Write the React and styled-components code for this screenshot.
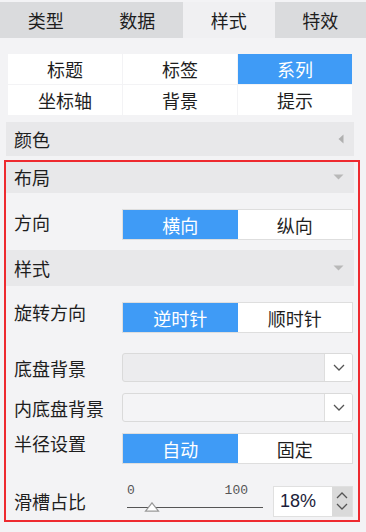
import React from "react";
import styled, { createGlobalStyle } from "styled-components";

const Global = createGlobalStyle`
  html, body { margin: 0; padding: 0; background: #f3f3f5; }
  body { font-family: "Noto Sans CJK SC", "Noto Sans", sans-serif; color: #222; }
  * { box-sizing: border-box; }
`;

const Page = styled.div`
  position: relative;
  width: 366px;
  height: 532px;
  overflow: hidden;
  background: #f3f3f5;
  padding-top: 2px;
`;

const TabBar = styled.div`
  display: grid;
  grid-template-columns: repeat(4, 1fr);
  height: 36px;
  background: #dadbdd;
`;

const Tab = styled.div`
  display: flex;
  align-items: center;
  justify-content: center;
  font-size: 18px;
  color: #1e1e1e;
  background: ${(p) => (p.$active ? "#f0f0f2" : "#dadbdd")};
`;

const SubTabs = styled.div`
  display: grid;
  grid-template-columns: repeat(3, 1fr);
  grid-auto-rows: 30px;
  gap: 1px;
  margin: 16px 14px 0 8px;
`;

const SubTab = styled.div`
  display: flex;
  align-items: center;
  justify-content: center;
  font-size: 18px;
  color: ${(p) => (p.$active ? "#fff" : "#1e1e1e")};
  background: ${(p) => (p.$active ? "#3f9bf6" : "#ffffff")};
`;

const Panel = styled.div`
  display: flex;
  flex-direction: column;
  margin: 7px 12px 0 6px;
`;

const SectionHeader = styled.div`
  display: flex;
  align-items: center;
  justify-content: space-between;
  height: ${(p) => p.$h || 34}px;
  margin-top: ${(p) => p.$top || 0}px;
  padding: 0 10px 0 8px;
  background: #e8e8ea;
  font-size: 18px;
  color: #1e1e1e;
`;

const Row = styled.div`
  display: flex;
  align-items: ${(p) => (p.$alignTop ? "flex-start" : "center")};
  margin-top: ${(p) => p.$top || 0}px;
  padding-right: 1px;
`;

const Label = styled.div`
  width: 116px;
  flex: none;
  padding-left: 8px;
  padding-top: ${(p) => p.$pt || 0}px;
  font-size: 18px;
  line-height: ${(p) => (p.$alignTop ? "20px" : "normal")};
  color: #1e1e1e;
`;

const Segmented = styled.div`
  flex: 1;
  display: grid;
  grid-template-columns: 1fr 1fr;
  height: 31px;
  border: 1px solid #dedede;
  background: #fff;
`;

const Segment = styled.div`
  display: flex;
  align-items: center;
  justify-content: center;
  font-size: 18px;
  color: ${(p) => (p.$active ? "#fff" : "#1e1e1e")};
  background: ${(p) => (p.$active ? "#3f9bf6" : "#fff")};
`;

const Select = styled.div`
  flex: 1;
  display: flex;
  height: 29px;
  border: 1px solid #dadada;
  border-radius: 3px;
  background: ${(p) => (p.$dim ? "#ececee" : "#f4f4f6")};
  overflow: hidden;
`;

const SelectField = styled.div`
  flex: 1;
`;

const SelectButton = styled.div`
  width: 28px;
  display: flex;
  align-items: center;
  justify-content: center;
  background: #fff;
  border-left: 1px solid #dedede;
`;

const SliderBox = styled.div`
  position: relative;
  width: 142px;
  height: 34px;
  flex: none;
  padding-left: 5px;
`;

const SliderLabels = styled.div`
  display: flex;
  justify-content: space-between;
  padding-right: 16px;
  font-family: "Liberation Mono", "DejaVu Sans Mono", monospace;
  font-size: 13px;
  line-height: 14px;
  color: #555;
`;

const Track = styled.div`
  margin-top: 9px;
  width: 136px;
  height: 1px;
  background: #555;
`;

const Thumb = styled.svg`
  position: absolute;
  left: 22px;
  top: 18px;
`;

const NumberBox = styled.div`
  flex: 1;
  display: flex;
  height: 31px;
  margin-left: 9px;
  border: 1px solid #e0e0e0;
  background: #fff;
`;

const NumberValue = styled.div`
  flex: 1;
  display: flex;
  align-items: center;
  padding-left: 6px;
  font-family: "Liberation Sans", Arial, sans-serif;
  font-size: 18px;
  color: #1c1d3a;
`;

const Spinner = styled.div`
  width: 20px;
  display: flex;
  flex-direction: column;
  align-items: center;
  justify-content: center;
  gap: 4px;
  background: #dadada;
`;

const RedBox = styled.div`
  position: absolute;
  left: 4px;
  top: 160px;
  width: 356px;
  height: 362px;
  border: 2px solid #ee2a2f;
  pointer-events: none;
`;

const Chevron = ({ up }) => (
  <svg width="12" height="7" viewBox="0 0 12 7">
    <path
      d={up ? "M1 6 L6 1 L11 6" : "M1 1 L6 6 L11 1"}
      fill="none"
      stroke="#555"
      strokeWidth="1.3"
    />
  </svg>
);

const TriLeft = () => (
  <svg width="6" height="10" viewBox="0 0 6 10">
    <path d="M5.5 0.5 L0.5 5 L5.5 9.5 Z" fill="#b0b0b0" />
  </svg>
);

const TriDown = () => (
  <svg width="11" height="6" viewBox="0 0 11 6">
    <path d="M0.5 0.5 L10.5 0.5 L5.5 5.5 Z" fill="#b8b8b8" />
  </svg>
);

export default function App() {
  return (
    <>
      <Global />
      <Page>
        <TabBar>
          <Tab>类型</Tab>
          <Tab>数据</Tab>
          <Tab $active>样式</Tab>
          <Tab>特效</Tab>
        </TabBar>
        <SubTabs>
          <SubTab>标题</SubTab>
          <SubTab>标签</SubTab>
          <SubTab $active>系列</SubTab>
          <SubTab>坐标轴</SubTab>
          <SubTab>背景</SubTab>
          <SubTab>提示</SubTab>
        </SubTabs>
        <Panel>
          <SectionHeader>
            <span>颜色</span>
            <TriLeft />
          </SectionHeader>
          <SectionHeader $top={4} $h={33}>
            <span>布局</span>
            <TriDown />
          </SectionHeader>
          <Row $top={16} $alignTop>
            <Label $alignTop $pt={3}>方向</Label>
            <Segmented>
              <Segment $active>横向</Segment>
              <Segment>纵向</Segment>
            </Segmented>
          </Row>
          <SectionHeader $top={10} $h={36}>
            <span>样式</span>
            <TriDown />
          </SectionHeader>
          <Row $top={16} $alignTop>
            <Label $alignTop>旋转方向</Label>
            <Segmented>
              <Segment $active>逆时针</Segment>
              <Segment>顺时针</Segment>
            </Segmented>
          </Row>
          <Row $top={20}>
            <Label>底盘背景</Label>
            <Select $dim>
              <SelectField />
              <SelectButton>
                <Chevron />
              </SelectButton>
            </Select>
          </Row>
          <Row $top={11}>
            <Label>内底盘背景</Label>
            <Select>
              <SelectField />
              <SelectButton>
                <Chevron />
              </SelectButton>
            </Select>
          </Row>
          <Row $top={11} $alignTop>
            <Label $alignTop>半径设置</Label>
            <Segmented>
              <Segment $active>自动</Segment>
              <Segment>固定</Segment>
            </Segmented>
          </Row>
          <Row $top={20}>
            <Label>滑槽占比</Label>
            <SliderBox>
              <SliderLabels>
                <span>0</span>
                <span>100</span>
              </SliderLabels>
              <Track />
              <Thumb width="16" height="10" viewBox="0 0 16 10">
                <path d="M8 0.8 L14.5 9.2 L1.5 9.2 Z" fill="#fff" stroke="#999" strokeWidth="1.2" />
              </Thumb>
            </SliderBox>
            <NumberBox>
              <NumberValue>18%</NumberValue>
              <Spinner>
                <Chevron up />
                <Chevron />
              </Spinner>
            </NumberBox>
          </Row>
        </Panel>
        <RedBox />
      </Page>
    </>
  );
}
